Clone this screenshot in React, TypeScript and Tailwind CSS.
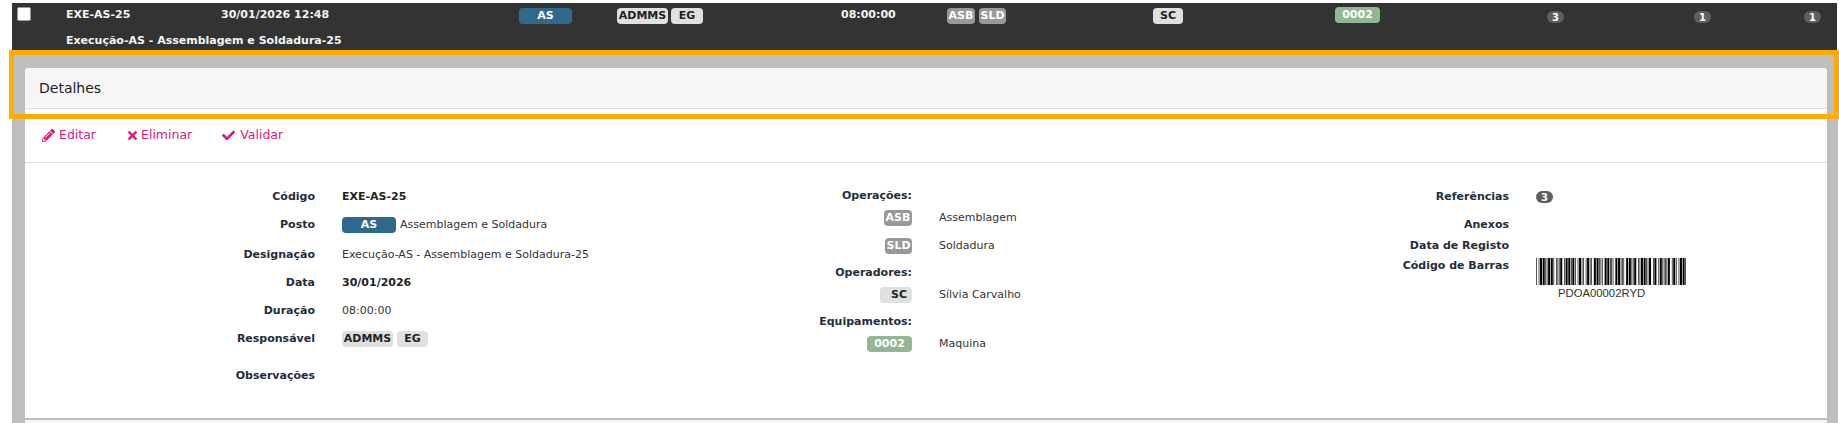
import type { ReactNode } from "react";
import { FaCheck, FaPencilAlt, FaTimes } from "react-icons/fa";

const CODE39: Record<string, string> = {
  "*": "nwnnwnwnn",
  "0": "nnnwwnwnn",
  "2": "nnwwnnnnw",
  A: "wnnnnwnnw",
  D: "nnnnwwnnw",
  O: "wnnnwnnwn",
  P: "nnwnwnnwn",
  R: "wnnnnnwwn",
  Y: "wwnnwnnnn",
};

function Barcode({ value }: { value: string }) {
  const bars: { x: number; w: number }[] = [];
  let x = 0;
  for (const ch of `*${value}*`) {
    CODE39[ch].split("").forEach((el, i) => {
      const w = el === "w" ? 3 : 1;
      if (i % 2 === 0) bars.push({ x, w });
      x += w;
    });
    x += 1;
  }
  return (
    <svg width="150" height="27" viewBox={`0 0 ${x - 1} 27`} preserveAspectRatio="none">
      {bars.map((b) => (
        <rect key={b.x} x={b.x} y="0" width={b.w} height="27" fill="#000" />
      ))}
    </svg>
  );
}

function Badge({ className, children }: { className: string; children: ReactNode }) {
  return (
    <span className={`flex h-4 items-center justify-center rounded-[4px] text-[11px] font-bold ${className}`}>
      {children}
    </span>
  );
}

function Count({ value }: { value: string }) {
  return (
    <span className="flex h-[12px] w-[17px] items-center justify-center rounded-full bg-[#5f5f5f] text-[10px] font-bold text-white">
      {value}
    </span>
  );
}

function TopRow() {
  return (
    <div className="ml-[12px] grid h-[47px] w-[1825px] grid-cols-[54px_155px_298px_98px_224px_106px_206px_182px_212px_147px_110px_33px] grid-rows-[24px_23px] bg-[#333333] text-[11px] font-bold text-[#f4f4f4]">
      <div className="flex items-start pt-[4px] pl-[5px]">
        <input type="checkbox" readOnly className="size-[14px] appearance-none rounded-[2px] border border-[#999999] bg-white" />
      </div>
      <div className="flex items-center">EXE-AS-25</div>
      <div className="flex items-center">30/01/2026 12:48</div>
      <div className="pt-[5px]">
        <Badge className="w-[53px] bg-[#2f6a8c] text-white">AS</Badge>
      </div>
      <div className="flex items-start gap-[3px] pt-[5px] text-[#222222]">
        <Badge className="w-[51px] bg-[#e0e0e0]">ADMMS</Badge>
        <Badge className="w-[32px] bg-[#e0e0e0]">EG</Badge>
      </div>
      <div className="flex items-center">08:00:00</div>
      <div className="flex items-start gap-[4px] pt-[5px]">
        <Badge className="w-[28px] bg-[#999999] text-[9.5px] text-white">ASB</Badge>
        <Badge className="w-[27px] bg-[#999999] text-[9.5px] text-white">SLD</Badge>
      </div>
      <div className="pt-[5px]">
        <Badge className="w-[30px] bg-[#e0e0e0] text-[#222222]">SC</Badge>
      </div>
      <div className="pt-[4px]">
        <Badge className="w-[45px] bg-[#93b795] text-white">0002</Badge>
      </div>
      <div className="pt-[8px]"><Count value="3" /></div>
      <div className="pt-[8px]"><Count value="1" /></div>
      <div className="pt-[8px]"><Count value="1" /></div>
      <div className="col-span-4 col-start-2 flex items-center pt-[5px]">Execução-AS - Assemblagem e Soldadura-25</div>
    </div>
  );
}

function Row({ label, labelWidth, className = "h-7", children }: { label?: ReactNode; labelWidth: string; className?: string; children?: ReactNode }) {
  return (
    <div className={`flex items-center gap-[27px] ${className}`}>
      <div className={`flex justify-end font-bold text-[#1f2d3d] ${labelWidth}`}>{label}</div>
      {children}
    </div>
  );
}

function Details() {
  const col1 = "w-[290px]";
  const col2 = "w-[307px]";
  const col3 = "w-[304px]";
  return (
    <div className="flex h-[255px] pt-[20px] text-[11px] text-[#333333]">
      <div className="w-[580px]">
        <Row label="Código" labelWidth={col1}>
          <span className="font-bold text-[#222222]">EXE-AS-25</span>
        </Row>
        <Row label="Posto" labelWidth={col1}>
          <span className="flex items-center gap-[4px]">
            <Badge className="w-[54px] bg-[#2f6a8c] text-white">AS</Badge>
            Assemblagem e Soldadura
          </span>
        </Row>
        <Row label="Designação" labelWidth={col1} className="mt-[2px] h-7">
          <span>Execução-AS - Assemblagem e Soldadura-25</span>
        </Row>
        <Row label="Data" labelWidth={col1}>
          <span className="font-bold text-[#222222]">30/01/2026</span>
        </Row>
        <Row label="Duração" labelWidth={col1}>
          <span>08:00:00</span>
        </Row>
        <Row label="Responsável" labelWidth={col1}>
          <span className="flex gap-[4px] text-[#222222]">
            <Badge className="w-[51px] bg-[#e0e0e0]">ADMMS</Badge>
            <Badge className="w-[31px] bg-[#e0e0e0]">EG</Badge>
          </span>
        </Row>
        <Row label="Observações" labelWidth={col1} className="mt-[9px] h-7" />
      </div>

      <div className="w-[600px] pt-[3px]">
        <Row label="Operações:" labelWidth={col2} className="h-[21px]" />
        <Row label={<Badge className="w-[28px] bg-[#999999] text-[9.5px] text-white">ASB</Badge>} labelWidth={col2} className="h-[22px]">
          <span>Assemblagem</span>
        </Row>
        <Row label={<Badge className="w-[27px] bg-[#999999] text-[9.5px] text-white">SLD</Badge>} labelWidth={col2} className="mt-[6px] h-[22px]">
          <span>Soldadura</span>
        </Row>
        <Row label="Operadores:" labelWidth={col2} className="mt-[5px] h-[22px]" />
        <Row label={<Badge className="w-[32px] bg-[#e0e0e0] pl-[6px] text-[#222222]">SC</Badge>} labelWidth={col2} className="h-[22px]">
          <span>Sílvia Carvalho</span>
        </Row>
        <Row label="Equipamentos:" labelWidth={col2} className="mt-[5px] h-[22px]" />
        <Row label={<Badge className="w-[45px] bg-[#93b795] text-white">0002</Badge>} labelWidth={col2} className="h-[22px]">
          <span>Maquina</span>
        </Row>
      </div>

      <div className="flex-1">
        <Row label="Referências" labelWidth={col3}>
          <Count value="3" />
        </Row>
        <Row label="Anexos" labelWidth={col3} />
        <Row label="Data de Registo" labelWidth={col3} className="h-[14px]" />
        <div className="mt-[5px] flex items-start gap-[27px]">
          <div className={`flex justify-end pt-[1px] font-bold text-[#1f2d3d] ${col3} leading-[14px]`}>Código de Barras</div>
          <div className="flex w-[150px] flex-col">
            <Barcode value="PDOA00002RYD" />
            <span className="pt-[1px] pl-[22px] font-['Liberation_Sans',sans-serif] text-[11.3px] leading-[14px] text-[#333333]">PDOA00002RYD</span>
          </div>
        </div>
      </div>
    </div>
  );
}

export default function App() {
  return (
    <div className="relative h-[423px] w-[1839px] overflow-hidden bg-white pt-[3px] font-['DejaVu_Sans',sans-serif]">
      <TopRow />
      <div className="ml-[12px] h-[373px] w-[1826px] bg-[#bebebe] pt-[18px] pr-[11px] pl-[13px]">
        <div className="h-[355px] rounded-t-[4px] bg-white">
          <div className="flex h-[41px] items-center rounded-t-[4px] border-b border-[#dddddd] bg-[#f6f6f6] pl-[14px] text-[14px] text-[#222222]">
            Detalhes
          </div>
          <div className="flex h-[54px] items-center gap-[30px] border-b border-[#dddddd] pl-[17px] text-[12.5px] text-[#d81b7a]">
            <span className="flex items-center gap-1"><FaPencilAlt size={13} /> Editar</span>
            <span className="flex items-center gap-[2px]"><FaTimes size={13} /> Eliminar</span>
            <span className="flex items-center gap-[5px]"><FaCheck size={13} /> Validar</span>
          </div>
          <Details />
          <div className="h-[5px] border-t-2 border-[#bebebe] bg-[#f5f5f5]" />
        </div>
      </div>
      <div className="pointer-events-none absolute top-[50px] left-[9px] h-[69px] w-[1830px] border-[5px] border-[#ffab00]" />
    </div>
  );
}
